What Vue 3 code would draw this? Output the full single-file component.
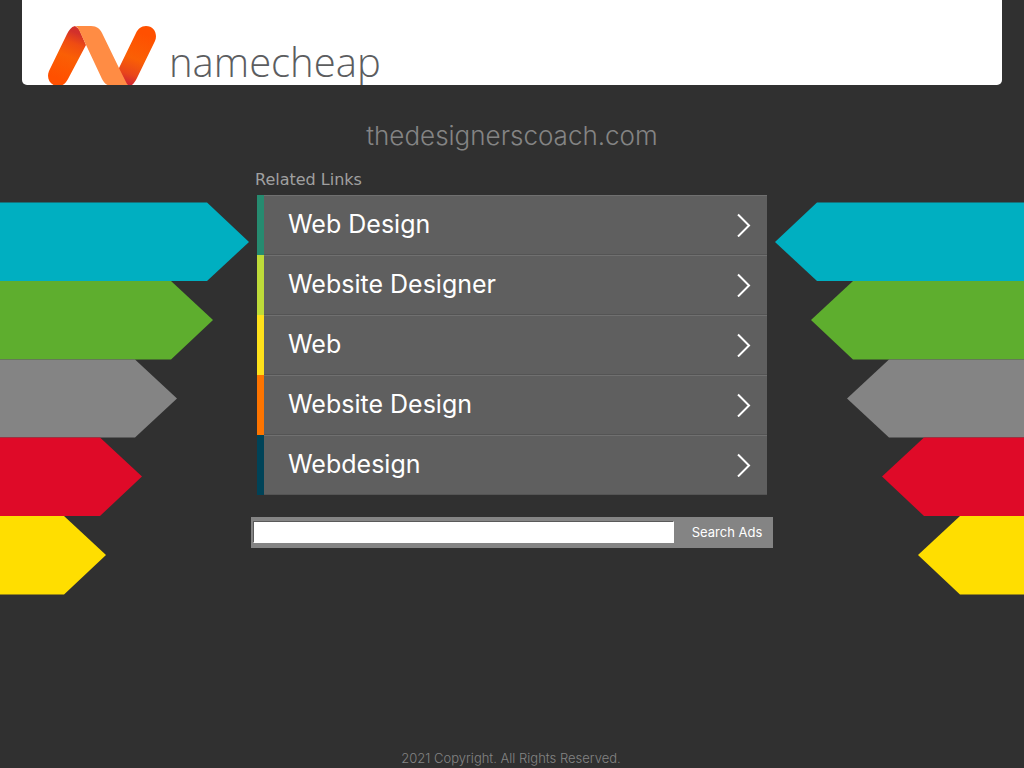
<script setup>
import { ref } from 'vue'

const query = ref('')

const links = [
  { label: 'Web Design', tone: 'green' },
  { label: 'Website Designer', tone: 'lime' },
  { label: 'Web', tone: 'yellow' },
  { label: 'Website Design', tone: 'orange' },
  { label: 'Webdesign', tone: 'navy' }
]

const arrows = [
  { fill: '#00afc1', points: '0,0.5 207,0.5 249,40 207,79 0,79' },
  { fill: '#5eae2e', points: '0,79 171,79 213,118 171,157.5 0,157.5' },
  { fill: '#848484', points: '0,157.5 135,157.5 177,196.5 135,235.5 0,235.5' },
  { fill: '#df0a28', points: '0,235.5 100,235.5 142,274.5 100,314 0,314' },
  { fill: '#ffde00', points: '0,314 64,314 106,353 64,392.5 0,392.5' }
]
</script>

<template>
  <div class="page">
    <header class="header">
      <a class="brand" href="#" aria-label="namecheap">
        <svg class="mark" viewBox="0 0 108 60" width="108" height="60" aria-hidden="true">
          <defs>
            <linearGradient id="leg-left" x1="32" y1="8" x2="14" y2="54" gradientUnits="userSpaceOnUse">
              <stop offset="0" stop-color="#d2302b" />
              <stop offset="0.22" stop-color="#ef4c12" />
              <stop offset="0.5" stop-color="#fa5f05" />
              <stop offset="1" stop-color="#ff5000" />
            </linearGradient>
            <linearGradient id="leg-right" x1="78" y1="58" x2="96" y2="8" gradientUnits="userSpaceOnUse">
              <stop offset="0" stop-color="#ce2434" />
              <stop offset="0.2" stop-color="#e9461a" />
              <stop offset="0.5" stop-color="#fa5f05" />
              <stop offset="1" stop-color="#ff5000" />
            </linearGradient>
          </defs>
          <path d="M27 0 C23 1 21 4 19 8 L1 45 C-2 52 2 60 10 60 C15 60 18 57 20 53 L38 19 L31 3 Z" fill="url(#leg-left)" />
          <path d="M82 60 C85 59 87 56 89 52 L107 15 C110 8 106 0 98 0 C93 0 90 3 88 7 L71 42 L68 46 L76 60 Z" fill="url(#leg-right)" />
          <path d="M26 0 L43 0 C49 0 52 3 54 7 L71 42 L78 56 C79 58 80 60 83 60 L64 60 C59 60 56 57 54 53 L32 6 C30 2 29 0 26 0 Z" fill="#ff8c44" />
        </svg>
        <span class="wordmark">namecheap</span>
      </a>
    </header>

    <div class="body">
      <svg class="arrows" viewBox="0 0 249 393" width="249" height="393" aria-hidden="true">
        <polygon v-for="a in arrows" :key="a.fill" :points="a.points" :fill="a.fill" />
      </svg>

      <main class="main">
        <h1 class="domain">thedesignerscoach.com</h1>
        <h2 class="related">Related Links</h2>
        <ul class="links">
          <li v-for="link in links" :key="link.label">
            <a class="link" :class="link.tone" href="#">
              <span class="label">{{ link.label }}</span>
              <svg class="chevron" viewBox="0 0 14 24" width="14" height="24" aria-hidden="true">
                <path d="M1 1.5 L12 12.5 L1 23.5" fill="none" stroke="#fff" stroke-width="2" />
              </svg>
            </a>
          </li>
        </ul>
        <form class="search" @submit.prevent>
          <input v-model="query" type="text" aria-label="Search Ads" />
          <button type="submit">Search Ads</button>
        </form>
      </main>

      <svg class="arrows right" viewBox="0 0 249 393" width="249" height="393" aria-hidden="true">
        <g transform="translate(249 0) scale(-1 1)">
          <polygon v-for="a in arrows" :key="a.fill" :points="a.points" :fill="a.fill" />
        </g>
      </svg>
    </div>

    <footer class="footer">2021 Copyright. All Rights Reserved.</footer>
  </div>
</template>

<style>
body {
  background: #303030;
}
</style>

<style scoped>
.page {
  display: flex;
  flex-direction: column;
  box-sizing: border-box;
  min-height: 100vh;
  background: #303030;
  font-family: Inter, "Liberation Sans", sans-serif;
}

.header {
  height: 85px;
  margin: 0 22px;
  overflow: hidden;
  background: #fff;
  border-radius: 0 0 5px 5px;
}

.brand {
  display: flex;
  gap: 13px;
  padding: 26px 26px 0;
  color: #5c5d5f;
  text-decoration: none;
}

.mark {
  flex: none;
}

.wordmark {
  padding-top: 10px;
  font-family: "Open Sans", sans-serif;
  font-size: 40px;
  font-weight: 300;
  line-height: 52px;
}

.body {
  display: grid;
  grid-template-columns: 1fr 522px 1fr;
  flex: 1;
}

.arrows {
  margin-top: 117px;
}

.right {
  justify-self: end;
}

.domain {
  margin: 35px 0 0;
  color: #848484;
  font-size: 26px;
  font-weight: 300;
  line-height: 32px;
  text-align: center;
}

.related {
  margin: 18px 0 0 4px;
  color: #a0a0a0;
  font-family: "DejaVu Sans", sans-serif;
  font-size: 16px;
  font-weight: 400;
  line-height: 20px;
}

.links {
  margin: 5px 6px 0;
  padding: 0;
  list-style: none;
}

.link {
  position: relative;
  display: flex;
  align-items: center;
  justify-content: space-between;
  box-sizing: border-box;
  height: 60px;
  margin-left: 7px;
  padding: 0 16px 0 24px;
  border-top: 1px solid #707070;
  border-bottom: 1px solid #545454;
  background: #5f5f5f;
  color: #fff;
  font-size: 25px;
  line-height: 32px;
  text-decoration: none;
}

.label {
  padding-bottom: 2px;
}

.link::before {
  content: "";
  position: absolute;
  top: -1px;
  bottom: -1px;
  left: -7px;
  width: 7px;
  background: var(--tone);
}

.green { --tone: #268b70; }
.lime { --tone: #bedb39; }
.yellow { --tone: #ffe11a; }
.orange { --tone: #fd7400; }
.navy { --tone: #004358; }

.search {
  display: flex;
  align-items: center;
  margin-top: 22px;
  padding: 4px 2px 5px;
  background: #848484;
}

.search input {
  flex: 1;
  box-sizing: border-box;
  min-width: 0;
  height: 22px;
  padding: 1px 2px;
  border: 1px solid;
  border-color: #5a5a5a #fff #fff #5a5a5a;
  background: #fff;
  font-size: 13px;
}

.search button {
  width: 97px;
  padding: 0 6px 0 15px;
  border: 0;
  background: none;
  color: #fff;
  font-family: inherit;
  font-size: 13px;
  line-height: 20px;
  white-space: nowrap;
}

.footer {
  padding: 0 2px 1px 0;
  color: #848484;
  font-size: 13px;
  font-weight: 300;
  line-height: 18px;
  text-align: center;
}
</style>
